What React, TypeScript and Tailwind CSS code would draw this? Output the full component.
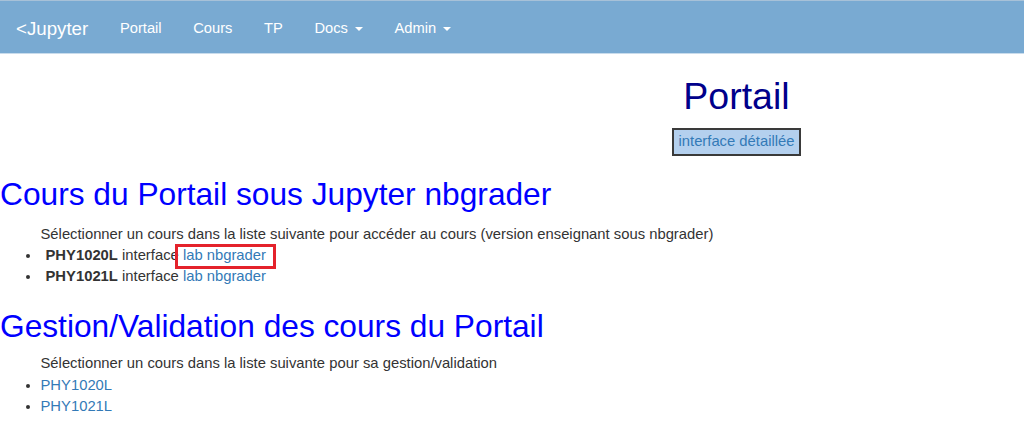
import React from 'react';

const font = { fontFamily: '"Liberation Sans", Arial, Helvetica, sans-serif' };

const Caret: React.FC = () => (
  <span className="ml-[7px] inline-block h-0 w-0 border-x-[4.2px] border-t-[4.2px] border-x-transparent border-t-white align-middle" />
);

const NavBar: React.FC = () => {
  const links = [
    { label: 'Portail', caret: false },
    { label: 'Cours', caret: false },
    { label: 'TP', caret: false },
    { label: 'Docs', caret: true },
    { label: 'Admin', caret: true },
  ];

  return (
    <nav className="flex h-[54px] items-stretch border-t border-b border-t-[#a7c1d8] border-b-[#c9dcec] bg-[#79aad2] text-white">
      <a href="#" className="flex items-center px-[16px] pt-[2px] text-[18.7px] leading-[21px]">
        &lt;Jupyter
      </a>
      <ul className="flex items-stretch">
        {links.map((l) => (
          <li key={l.label} className="flex">
            <a href="#" className="flex items-center px-[15.8px] pt-[3px] text-[14.7px] leading-[21px]">
              {l.label}
              {l.caret && <Caret />}
            </a>
          </li>
        ))}
      </ul>
    </nav>
  );
};

const courses = ['PHY1020L', 'PHY1021L'];

const App: React.FC = () => {
  return (
    <div className="min-h-[432px] bg-white text-[14.8px] leading-[21px] text-[#333]" style={font}>
      <NavBar />

      <div className="pl-[449px] text-center">
        <h1 className="mt-[22px] mb-[10.5px] text-[37.5px] leading-[1.1] text-[#00008b]">Portail</h1>
        <button className="h-[28px] border-2 border-[#3a3a3a] bg-[#b4d0ee] px-[5px] text-[14.8px] leading-[21px] text-[#337ab7]">
          interface détaillée
        </button>
      </div>

      <h2 className="mt-[21px] mb-[12px] text-[31.7px] leading-[1.1] text-[#0000ff]">
        Cours du Portail sous Jupyter nbgrader
      </h2>
      <ul className="list-disc pl-[40.5px]">
        <div className="list-none">
          Sélectionner un cours dans la liste suivante pour accéder au cours (version enseignant sous nbgrader)
        </div>
        {courses.map((c, i) => (
          <li key={c}>
            <b className="ml-[5px]">{c}</b> interface{' '}
            <span className="relative">
              <a href="#" className="text-[#337ab7]">lab nbgrader</a>
              {i === 0 && (
                <span className="pointer-events-none absolute top-[-3px] right-[-10px] bottom-[-6px] left-[-8px] border-[3px] border-[#e4222b]" />
              )}
            </span>
          </li>
        ))}
      </ul>

      <h2 className="mt-[22px] mb-[10px] text-[31.7px] leading-[1.1] text-[#0000ff]">
        Gestion/Validation des cours du Portail
      </h2>
      <ul className="list-disc pl-[40.5px] leading-[21.5px]">
        <div className="list-none">Sélectionner un cours dans la liste suivante pour sa gestion/validation</div>
        {courses.map((c) => (
          <li key={c}>
            <a href="#" className="text-[#337ab7]">{c}</a>
          </li>
        ))}
      </ul>
    </div>
  );
};

export default App;
